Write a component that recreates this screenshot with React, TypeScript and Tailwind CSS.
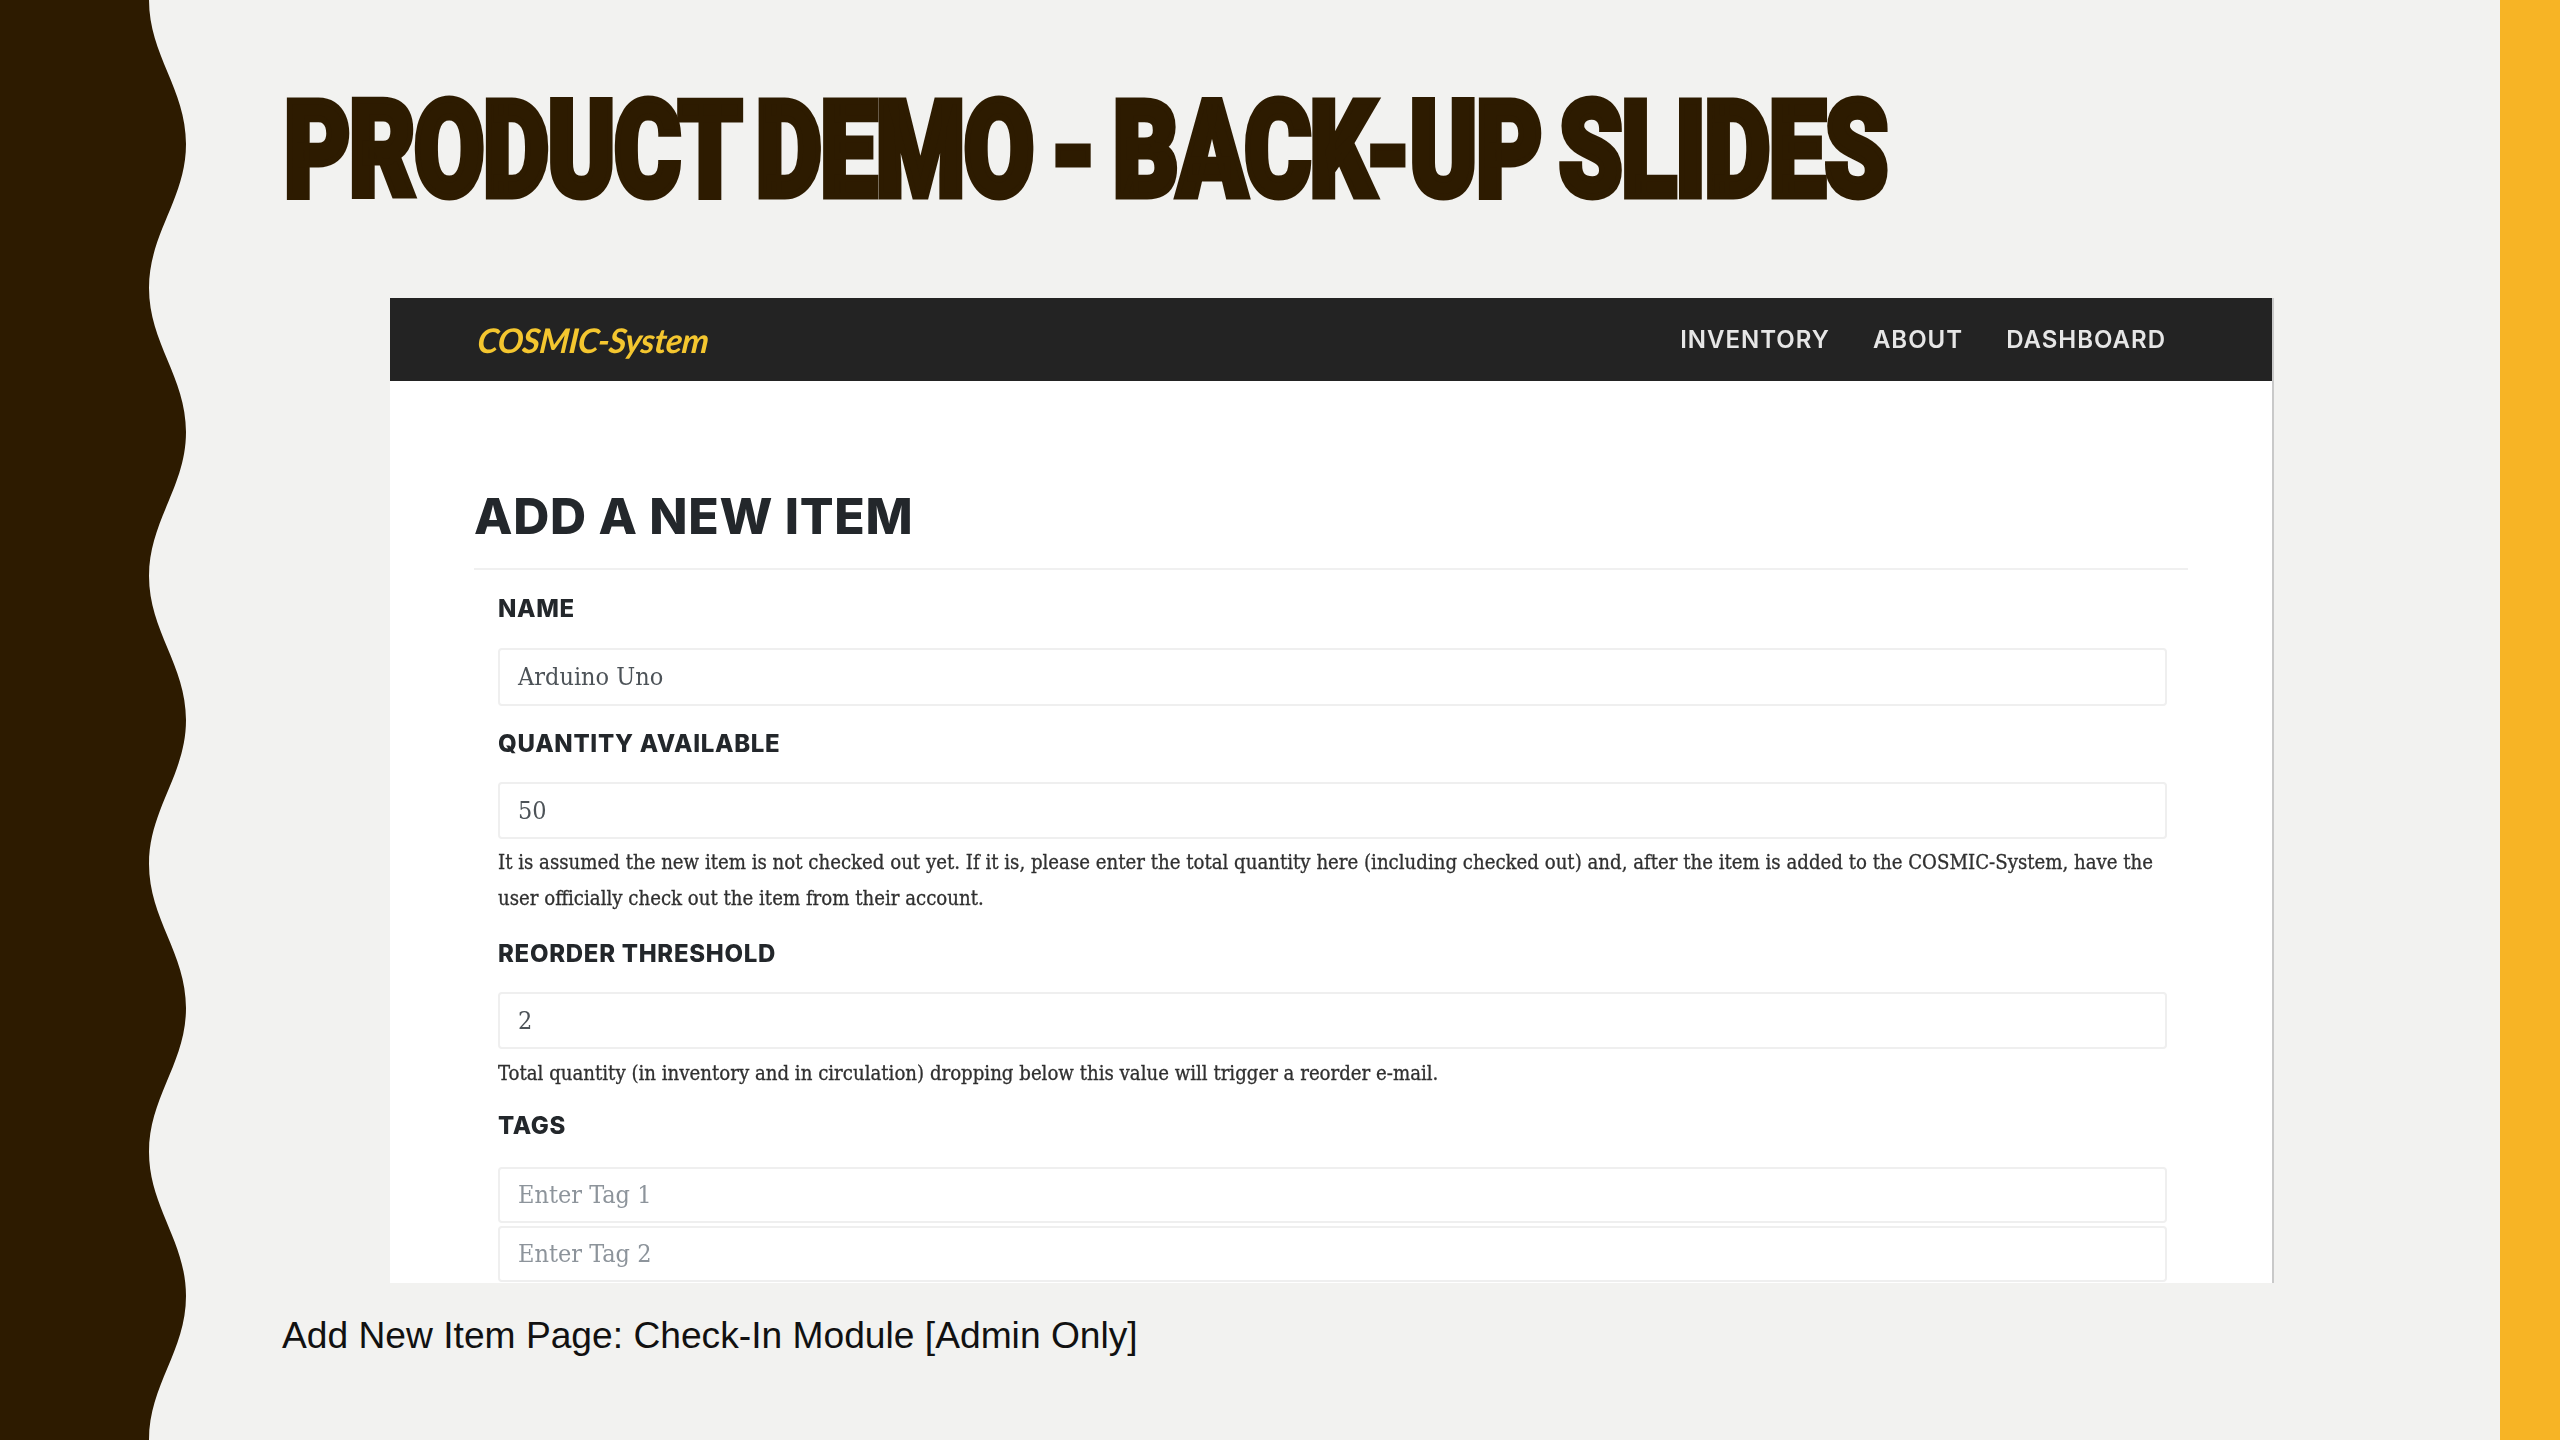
const serif = "font-['DejaVu_Serif',serif] [font-stretch:condensed]";
const labelCls = "font-['Inter',sans-serif] font-extrabold text-[24px] leading-[30px] tracking-[0.7px] text-[#23272b]";
const inputCls = `rounded-[4px] border-2 border-[#efefef] bg-white pl-[18px] flex items-center ${serif} text-[25px]`;
const helpCls = `${serif} text-[20.2px] leading-[36px] text-[#303030] whitespace-nowrap [-webkit-text-stroke:0.3px_#303030]`;

// scalloped edge of the left band, one period is 288px
function WaveBand() {
  return (
    <svg width="186" height="1440" viewBox="0 0 186 1440" className="block shrink-0">
      <path
        fill="#2d1b00"
        d="M0 0H149C149 55 186 89 186 144S149 233 149 288 186 377 186 432 149 521 149 576 186 665 186 720 149 809 149 864 186 953 186 1008 149 1097 149 1152 186 1241 186 1296 149 1385 149 1440H0Z"
      />
    </svg>
  );
}

function Field({ value, muted, className = "" }: { value: string; muted?: boolean; className?: string }) {
  return (
    <div className={`${inputCls} ${muted ? "text-[#8d949b]" : "text-[#4d5358]"} ${className}`}>{value}</div>
  );
}

function NavBar() {
  return (
    <div className="h-[83px] bg-[#232323] flex items-center justify-between pl-[88px] pr-[106px]">
      <span className="inline-block -skew-x-6 font-['Lato',sans-serif] italic font-bold text-[34px] tracking-[-0.5px] text-[#f4c62f]">
        COSMIC-System
      </span>
      <div className="flex gap-[43px] font-['Inter',sans-serif] font-semibold text-[24px] tracking-[1px] text-[#e6e6e6]">
        <span>INVENTORY</span>
        <span>ABOUT</span>
        <span>DASHBOARD</span>
      </div>
    </div>
  );
}

function ItemForm() {
  return (
    <div className="w-[1884px] h-[985px] bg-white border-r-2 border-[#c9c9c9] overflow-hidden blur-[0.5px]">
      <NavBar />
      <div className="pl-[84px] pr-[84px]">
        <div className="pt-[111px] pb-[28px] border-b-2 border-[#f0f0f0]">
          <h2 className="font-['Inter',sans-serif] font-extrabold text-[50px] leading-[48px] tracking-[0.7px] text-[#23272b]">
            ADD A NEW ITEM
          </h2>
        </div>
        <div className="pl-[24px] pr-[21px]">
          <div className={`${labelCls} mt-[24px]`}>NAME</div>
          <Field value="Arduino Uno" className="h-[58px] mt-[24px]" />
          <div className={`${labelCls} mt-[23px]`}>QUANTITY AVAILABLE</div>
          <Field value="50" className="h-[57px] mt-[23px]" />
          <div className={`${helpCls} mt-[5px]`}>
            It is assumed the new item is not checked out yet. If it is, please enter the total quantity here (including checked out) and, after the item is added to the COSMIC-System, have the
            <br />
            user officially check out the item from their account.
          </div>
          <div className={`${labelCls} mt-[23px]`}>REORDER THRESHOLD</div>
          <Field value="2" className="h-[57px] mt-[23px]" />
          <div className={`${helpCls} mt-[6px]`}>
            Total quantity (in inventory and in circulation) dropping below this value will trigger a reorder e-mail.
          </div>
          <div className={`${labelCls} mt-[20px]`}>TAGS</div>
          <Field value="Enter Tag 1" muted className="h-[56px] mt-[26px]" />
          <Field value="Enter Tag 2" muted className="h-[56px] mt-[3px]" />
        </div>
      </div>
    </div>
  );
}

export default function App() {
  return (
    <div className="w-[2560px] h-[1440px] flex bg-[#f2f2f0] overflow-hidden">
      <WaveBand />
      <div className="flex-1 min-w-0">
        <h1 className="ml-[98px] mt-[73px] h-[225px] origin-left scale-x-[0.762] whitespace-nowrap font-['Roboto',sans-serif] font-black text-[134px] leading-[155px] tracking-[-2px] [word-spacing:-8px] text-[#2d1b00] [-webkit-text-stroke:7px_#2d1b00]">
          PRODUCT DEMO - BACK-UP SLIDES
        </h1>
        <div className="ml-[204px]">
          <ItemForm />
        </div>
        <p className="ml-[96px] mt-[27px] font-['Liberation_Sans',sans-serif] text-[37.2px] leading-[50px] text-[#111111]">
          Add New Item Page: Check-In Module [Admin Only]
        </p>
      </div>
      <div className="w-[60px] shrink-0 bg-[#f7b425]" />
    </div>
  );
}
